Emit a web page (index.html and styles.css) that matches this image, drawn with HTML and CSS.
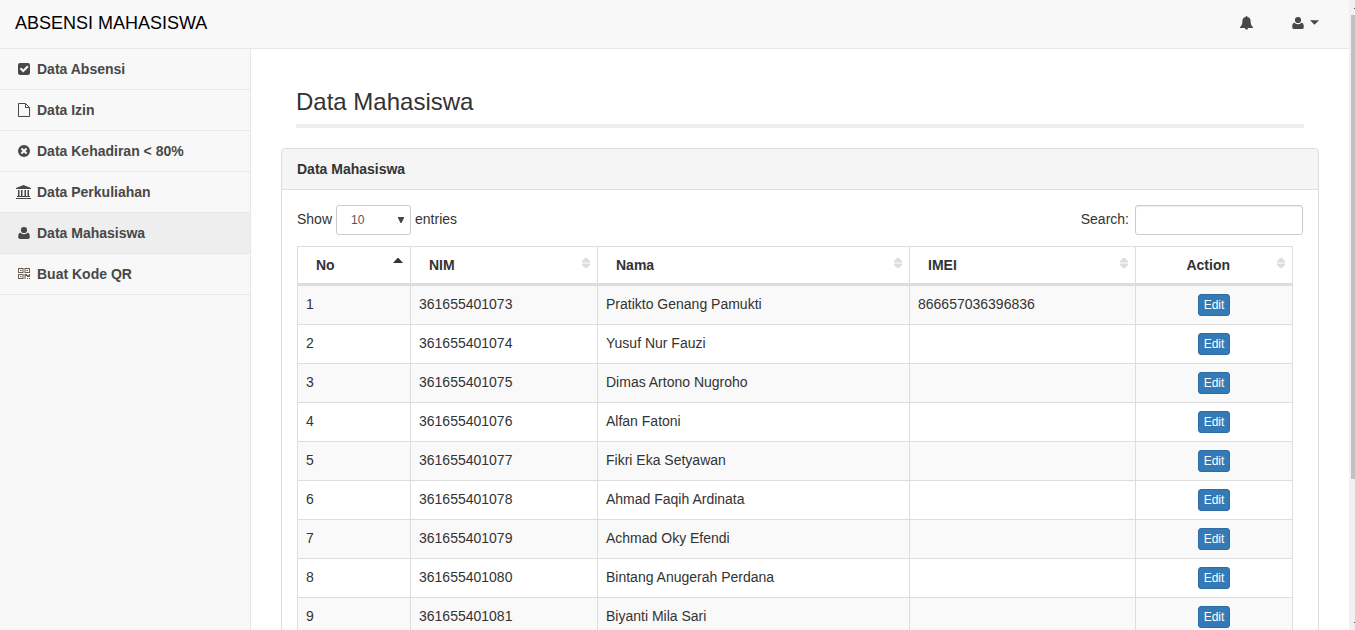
FILE: index.html
```
<!DOCTYPE html>
<html lang="id">
<head>
<meta charset="utf-8">
<title>Absensi Mahasiswa</title>
<link rel="stylesheet" href="styles.css">
</head>
<body>
<div class="window">
  <div class="app">
    <header class="navbar">
      <a class="brand">ABSENSI MAHASISWA</a>
      <nav class="top-links">
        <svg class="icon" viewBox="0 0 16 16"><path d="M8.500 1c.6 0 .9.400.8 1 2.200.4 3.300 1.900 3.300 4 0 3 .8 4.800 2.400 6.200V13h-5a1.500 1.800 0 0 1-3 0H2v-.8C3.600 10.800 4.400 9 4.400 6c0-2.100 1.100-3.600 3.300-4-.1-.6.200-1 .8-1z"/></svg>
        <span class="account">
          <svg class="icon" viewBox="0 0 16 16"><circle cx="8" cy="5" r="3.100"/><path d="M4.600 7.800C2.800 7.800 2.200 9.600 2.200 12c0 1.200.7 2 1.700 2h8.200c1 0 1.700-.8 1.700-2 0-2.400-.6-4.200-2.400-4.200a4.600 4.600 0 0 1-6.800 0z"/></svg>
          <svg class="caret" viewBox="0 0 8 4"><path d="M0 0h8L4 4z"/></svg>
        </span>
      </nav>
    </header>
    <div class="body">
      <aside class="sidebar">
        <a class="item"><svg class="icon" viewBox="0 0 16 16"><path fill-rule="evenodd" d="M4.200 2h7.600A2.200 2.200 0 0 1 14 4.200v7.600a2.200 2.200 0 0 1-2.200 2.200H4.200A2.200 2.200 0 0 1 2 11.800V4.200A2.200 2.200 0 0 1 4.200 2zM7.200 11.500 12.700 6 11.200 4.500l-4 4-2-2L3.700 8z"/></svg>Data Absensi</a>
        <a class="item"><svg class="icon line" viewBox="0 0 16 16"><path d="M2.500 1.500h7l4 4v9h-11zM9.500 1.500v4h4"/></svg>Data Izin</a>
        <a class="item"><svg class="icon" viewBox="0 0 16 16"><path fill-rule="evenodd" d="M8 2a6 6 0 1 1 0 12A6 6 0 0 1 8 2zM6.200 4.700 4.700 6.200 6.500 8 4.700 9.800l1.500 1.500L8 9.500l1.800 1.800 1.500-1.500L9.500 8l1.800-1.800-1.500-1.500L8 6.500z"/></svg>Data Kehadiran &lt; 80%</a>
        <a class="item"><svg class="icon" viewBox="0 0 16 16"><path d="M7.500 1 15 4v1H0V4zM2 6h1.500v6H2zM5 6h1.500v6H5zM8.500 6H10v6H8.500zM11.500 6H13v6h-1.500zM1 12h13v1H1zM0 14h15v1H0z"/></svg>Data Perkuliahan</a>
        <a class="item active"><svg class="icon" viewBox="0 0 16 16"><circle cx="8" cy="5" r="3.100"/><path d="M4.600 7.800C2.800 7.800 2.200 9.600 2.200 12c0 1.200.7 2 1.700 2h8.200c1 0 1.700-.8 1.700-2 0-2.400-.6-4.200-2.400-4.200a4.600 4.600 0 0 1-6.800 0z"/></svg>Data Mahasiswa</a>
        <a class="item"><svg class="icon qr" viewBox="0 0 16 16"><path fill-rule="evenodd" d="M2 2h5.500v5H2zm1 1v3h3.500V3zM8.500 2H14v5H8.500zm1 1v3H13V3zM2 8h5.500v5H2zm1 1v3h3.500V9zM4 4h1.500v1H4zM10.500 4H12v1h-1.500zM4 10h1.500v1H4zM8.500 8H11v1h2V8h1v3h-3v-1h-1.500v3h-1zM11 12h1v1h-1zM13 12h1v1h-1z"/></svg>Buat Kode QR</a>
      </aside>
      <main class="content">
        <h2 class="page-title">Data Mahasiswa</h2>
        <section class="panel">
          <div class="panel-heading">Data Mahasiswa</div>
          <div class="panel-body">
            <div class="controls">
              <div class="length">Show <span class="select">10<svg class="arrow" viewBox="0 0 6 6"><path d="M0 0h6v1L3.500 6h-1L0 1z"/></svg></span> entries</div>
              <label class="search">Search:<input class="search-input" type="text"></label>
            </div>
            <table class="table">
              <colgroup><col class="c-no"><col class="c-nim"><col class="c-nama"><col class="c-imei"><col class="c-action"></colgroup>
              <thead>
                <tr>
                  <th><div class="head">No<svg class="asc" viewBox="0 0 10 5"><path d="M4.500 0h1L10 5H0z"/></svg></div></th>
                  <th><div class="head">NIM<svg class="sort" viewBox="0 0 8 10"><path d="M3 0h2l3 3v1.600H0V3zM0 5.400h8V7l-3 3H3L0 7z"/></svg></div></th>
                  <th><div class="head">Nama<svg class="sort" viewBox="0 0 8 10"><path d="M3 0h2l3 3v1.600H0V3zM0 5.400h8V7l-3 3H3L0 7z"/></svg></div></th>
                  <th><div class="head">IMEI<svg class="sort" viewBox="0 0 8 10"><path d="M3 0h2l3 3v1.600H0V3zM0 5.400h8V7l-3 3H3L0 7z"/></svg></div></th>
                  <th><div class="head centered">Action<svg class="sort" viewBox="0 0 8 10"><path d="M3 0h2l3 3v1.600H0V3zM0 5.400h8V7l-3 3H3L0 7z"/></svg></div></th>
                </tr>
              </thead>
              <tbody>
                <tr><td>1</td><td>361655401073</td><td>Pratikto Genang Pamukti</td><td>866657036396836</td><td><a class="btn">Edit</a></td></tr>
                <tr><td>2</td><td>361655401074</td><td>Yusuf Nur Fauzi</td><td></td><td><a class="btn">Edit</a></td></tr>
                <tr><td>3</td><td>361655401075</td><td>Dimas Artono Nugroho</td><td></td><td><a class="btn">Edit</a></td></tr>
                <tr><td>4</td><td>361655401076</td><td>Alfan Fatoni</td><td></td><td><a class="btn">Edit</a></td></tr>
                <tr><td>5</td><td>361655401077</td><td>Fikri Eka Setyawan</td><td></td><td><a class="btn">Edit</a></td></tr>
                <tr><td>6</td><td>361655401078</td><td>Ahmad Faqih Ardinata</td><td></td><td><a class="btn">Edit</a></td></tr>
                <tr><td>7</td><td>361655401079</td><td>Achmad Oky Efendi</td><td></td><td><a class="btn">Edit</a></td></tr>
                <tr><td>8</td><td>361655401080</td><td>Bintang Anugerah Perdana</td><td></td><td><a class="btn">Edit</a></td></tr>
                <tr><td>9</td><td>361655401081</td><td>Biyanti Mila Sari</td><td></td><td><a class="btn">Edit</a></td></tr>
              </tbody>
            </table>
          </div>
        </section>
      </main>
    </div>
  </div>
  <div class="scrollbar"><i class="tick"></i><div class="thumb"></div><i class="tick"></i></div>
</div>
</body>
</html>
```

FILE: styles.css
```
* { box-sizing: border-box; }

body {
  margin: 0;
  overflow: hidden;
  font: 14px/20px "Liberation Sans", Arial, sans-serif;
  color: #333;
  background: #fff;
}

.window { display: flex; height: 630px; overflow: hidden; }
.app { flex: 1; display: flex; flex-direction: column; min-width: 0; }

.navbar {
  flex: none;
  display: flex;
  justify-content: space-between;
  align-items: center;
  height: 49px;
  padding: 0 30px 3px 15px;
  background: #f8f8f8;
  border-bottom: 1px solid #e7e7e7;
}
.brand { font-size: 18px; color: #000; }
.top-links { display: flex; align-items: center; gap: 36px; }
.account { display: flex; align-items: center; gap: 4px; }
.icon { flex: none; width: 16px; height: 16px; fill: #484848; }
.icon.line { fill: none; stroke: #484848; }
.icon.qr { fill: #6a5f55; }
.caret { width: 9px; height: 5px; fill: #484848; }

.body { flex: 1; display: flex; min-height: 0; }

.sidebar {
  flex: none;
  width: 251px;
  background: #f8f8f8;
  border-right: 1px solid #e7e7e7;
}
.item {
  display: flex;
  align-items: center;
  gap: 5px;
  height: 41px;
  padding-left: 16px;
  border-bottom: 1px solid #e7e7e7;
  font-weight: bold;
  color: #484848;
}
.item.active { background: #eee; }

.content { flex: 1; padding: 36px 30px 0; min-width: 0; }
.page-title {
  height: 43px;
  margin: 0 15px 20px;
  padding-top: 4px;
  border-bottom: 4px solid #eee;
  font-size: 24px;
  line-height: 26px;
  font-weight: normal;
}

.panel { border: 1px solid #ddd; border-radius: 4px; }
.panel-heading {
  height: 41px;
  padding: 10px 15px;
  background: #f5f5f5;
  border-bottom: 1px solid #ddd;
  border-radius: 3px 3px 0 0;
  font-weight: bold;
}
.panel-body { padding: 15px; }
.controls {
  display: flex;
  justify-content: space-between;
  height: 41px;
  line-height: 28px;
}
.length { display: flex; gap: 4px; }
.search { display: flex; gap: 6px; }
.select {
  display: flex;
  align-items: center;
  justify-content: space-between;
  width: 75px;
  height: 30px;
  padding: 0 6px 0 14px;
  border: 1px solid #ccc;
  border-radius: 3px;
  font-size: 12px;
  color: #555;
}
.arrow { width: 6px; height: 6px; fill: #484848; }
.search-input {
  width: 168px;
  height: 30px;
  border: 1px solid #ccc;
  border-radius: 3px;
  box-shadow: inset 0 1px 1px rgba(0, 0, 0, .075);
}

.table {
  width: 996px;
  table-layout: fixed;
  border-collapse: separate;
  border-spacing: 0;
  border-top: 1px solid #ddd;
  border-left: 1px solid #ddd;
}
.c-no { width: 113px; }
.c-nim { width: 187px; }
.c-nama { width: 312px; }
.c-imei { width: 226px; }
.c-action { width: 157px; }
th, td { border-right: 1px solid #ddd; border-bottom: 1px solid #ddd; }
th {
  height: 39px;
  padding: 0 7px 0 18px;
  border-bottom-width: 3px;
  text-align: left;
}
.head { display: flex; justify-content: space-between; align-items: center; }
.head.centered { justify-content: flex-end; gap: 47px; }
.sort { width: 8px; height: 10px; margin-bottom: 4px; fill: #ddd; }
.asc { width: 10px; height: 5px; margin-bottom: 9px; fill: #333; }
td { height: 39px; padding: 8px 8px 0; vertical-align: top; }
td:last-child { text-align: center; }
tbody tr:nth-child(odd) { background: #f9f9f9; }
.btn {
  display: inline-block;
  height: 22px;
  padding: 1px 5px;
  border: 1px solid #2e6da4;
  border-radius: 3px;
  background: #337ab7;
  font-size: 12px;
  line-height: 18px;
  color: #fff;
  vertical-align: top;
}

.scrollbar {
  flex: none;
  display: flex;
  flex-direction: column;
  align-items: flex-end;
  width: 6px;
  padding: 8px 0 7px;
  background: #f1f1f1;
}
.tick { width: 1px; height: 1px; background: #505050; }
.thumb { width: 4px; height: 464px; margin: 6px 0 auto; background: #c1c1c1; }
```
